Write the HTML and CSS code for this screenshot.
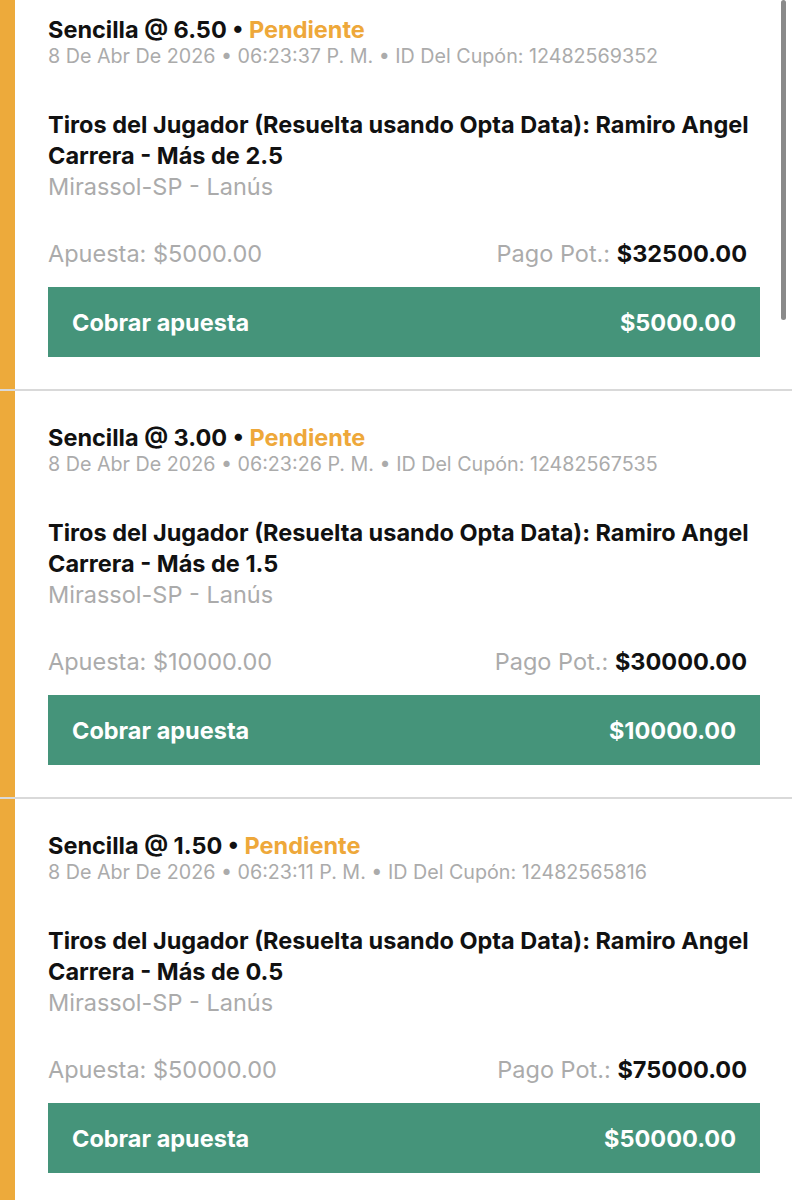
FILE: index.html
```html
<!DOCTYPE html>
<html>
<head>
    <meta charset="utf-8">
    <link rel="stylesheet" href="styles.css">
</head>
<body>
    <div class="bet-list">
        <div class="bet">
            <div class="bet-bar"></div>
            <div class="bet-body">
                <div class="bet-title">Sencilla @ 6.50 &bull; <span class="status">Pendiente</span></div>
                <div class="bet-meta">8 De Abr De 2026 &bull; 06:23:37 P. M. &bull; ID Del Cupón: 12482569352</div>
                <div class="bet-market">Tiros del Jugador (Resuelta usando Opta Data): Ramiro Angel Carrera - Más de 2.5</div>
                <div class="bet-event">Mirassol-SP - Lanús</div>
                <div class="bet-amounts">
                    <span>Apuesta: $5000.00</span>
                    <span>Pago Pot.: <b>$32500.00</b></span>
                </div>
                <div class="cashout">
                    <span>Cobrar apuesta</span>
                    <span>$5000.00</span>
                </div>
            </div>
        </div>
        <div class="bet">
            <div class="bet-bar"></div>
            <div class="bet-body">
                <div class="bet-title">Sencilla @ 3.00 &bull; <span class="status">Pendiente</span></div>
                <div class="bet-meta">8 De Abr De 2026 &bull; 06:23:26 P. M. &bull; ID Del Cupón: 12482567535</div>
                <div class="bet-market">Tiros del Jugador (Resuelta usando Opta Data): Ramiro Angel Carrera - Más de 1.5</div>
                <div class="bet-event">Mirassol-SP - Lanús</div>
                <div class="bet-amounts">
                    <span>Apuesta: $10000.00</span>
                    <span>Pago Pot.: <b>$30000.00</b></span>
                </div>
                <div class="cashout">
                    <span>Cobrar apuesta</span>
                    <span>$10000.00</span>
                </div>
            </div>
        </div>
        <div class="bet">
            <div class="bet-bar"></div>
            <div class="bet-body">
                <div class="bet-title">Sencilla @ 1.50 &bull; <span class="status">Pendiente</span></div>
                <div class="bet-meta">8 De Abr De 2026 &bull; 06:23:11 P. M. &bull; ID Del Cupón: 12482565816</div>
                <div class="bet-market">Tiros del Jugador (Resuelta usando Opta Data): Ramiro Angel Carrera - Más de 0.5</div>
                <div class="bet-event">Mirassol-SP - Lanús</div>
                <div class="bet-amounts">
                    <span>Apuesta: $50000.00</span>
                    <span>Pago Pot.: <b>$75000.00</b></span>
                </div>
                <div class="cashout">
                    <span>Cobrar apuesta</span>
                    <span>$50000.00</span>
                </div>
            </div>
        </div>
    </div>
    <div class="scroll-thumb"></div>
</body>
</html>
```

FILE: styles.css
```css
body {
    margin: 0;
    height: 1200px;
    overflow: hidden;
    background-color: #ffffff;
    color: #111111;
    font-family: Inter, "Noto Sans", sans-serif;
    font-size: 23.5px;
}

/* list is scrolled a little, first separator sits above the fold */
.bet-list {
    margin-top: -17px;
}

.bet {
    display: flex;
    border-bottom: 2px solid #d9d9d9;
}

.bet-bar {
    width: 15px;
    flex-shrink: 0;
    background-color: #edaa3b;
}

.bet-body {
    flex-grow: 1;
    padding: 34px 32px 32px 33px;
}

.bet-title {
    font-weight: 700;
    line-height: 26px;
}
.bet-title .status {
    color: #eea83a;
}

.bet-meta {
    font-size: 19.7px;
    line-height: 26px;
    color: #ababab;
}

.bet-market {
    margin-top: 40px;
    font-weight: 700;
    line-height: 31px;
}

.bet-event {
    line-height: 31px;
    color: #ababab;
}

.bet-amounts {
    display: flex;
    justify-content: space-between;
    margin-top: 36px;
    padding-right: 13px;
    line-height: 31px;
    color: #ababab;
}
.bet-amounts b {
    color: #111111;
}

.cashout {
    display: flex;
    justify-content: space-between;
    align-items: center;
    height: 70px;
    margin-top: 18px;
    padding: 0 24px;
    background-color: #45947a;
    color: #ffffff;
    font-weight: 700;
}

.scroll-thumb {
    position: fixed;
    top: 0;
    right: 6px;
    width: 5px;
    height: 320px;
    border-radius: 3px;
    background-color: #8a8a8a;
}
```
